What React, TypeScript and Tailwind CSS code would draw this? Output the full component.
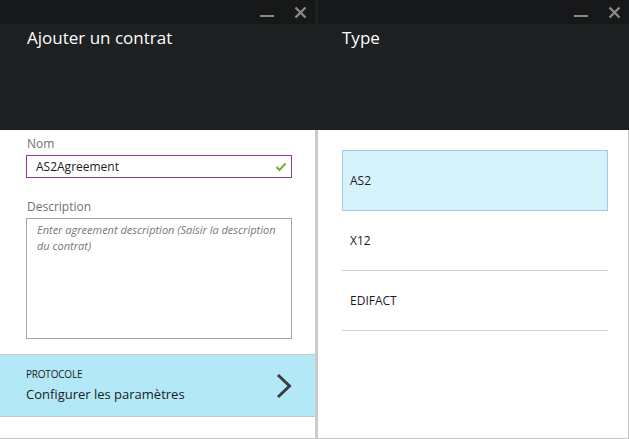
import React from 'react';

const font = { fontFamily: '"Open Sans", "Noto Sans", sans-serif' };

const WindowControls = () => (
  <div className="flex items-center gap-[20px]">
    <div className="w-[14px] h-[2px] bg-[#8a8a8a] mt-[8px]" />
    <svg width="13" height="13" viewBox="0 0 13 13">
      <path d="M1.5 1.5 L11.5 11.5 M11.5 1.5 L1.5 11.5" stroke="#8a8a8a" strokeWidth="2.4" />
    </svg>
  </div>
);

const Header = ({ title, pad }: { title: string; pad: string }) => (
  <div className="h-[130px] bg-[#1e2122] flex flex-col">
    <div className="h-[24px] bg-[#17181a] flex justify-end items-center pr-[8px]">
      <WindowControls />
    </div>
    <div className={`${pad} pt-[2px] text-[17px] text-white leading-[24px]`}>{title}</div>
  </div>
);

const ContractPanel = () => (
  <div className="w-[315px] flex flex-col">
    <Header title="Ajouter un contrat" pad="px-[27px]" />
    <div className="flex-1 flex flex-col bg-white border-b border-[#c8c8c8]">
      <div className="pl-[26px] pr-[23px] pt-[6px]">
        <div className="text-[12px] text-[#707070] leading-[16px] pl-[1px]">Nom</div>
        <div className="mt-[3px] h-[23px] border border-[#8e3c9c] flex items-center justify-between pl-[9px] pr-[4px]">
          <span className="text-[12px] text-[#1a1a1a]">AS2Agreement</span>
          <svg width="12" height="10" viewBox="0 0 12 10">
            <path d="M1.5 5 L4.5 8 L10.5 1.5" stroke="#6ab43c" strokeWidth="2" fill="none" />
          </svg>
        </div>
        <div className="mt-[21px] text-[12px] text-[#707070] leading-[16px] pl-[1px]">Description</div>
        <div className="mt-[3px] h-[121px] border border-[#a6a6a6] pl-[10px] pr-[6px] pt-[3px]">
          <div className="text-[11px] italic text-[#777777] leading-[16px]">
            Enter agreement description (Saisir la description du contrat)
          </div>
        </div>
      </div>
      <div className="mt-[15px] h-[63px] bg-[#b3e9f7] border-y border-[#c8c8c8] flex items-center justify-between pl-[26px] pr-[23px]">
        <div className="flex flex-col">
          <span className="text-[10px] text-[#1a1a1a] leading-[14px] tracking-[-0.2px]">PROTOCOLE</span>
          <span className="text-[13px] text-[#1a1a1a] leading-[20px] mt-[3px]">Configurer les paramètres</span>
        </div>
        <svg width="16" height="26" viewBox="0 0 16 26">
          <path d="M2 2 L13.5 13 L2 24" stroke="#3a3d40" strokeWidth="3" fill="none" />
        </svg>
      </div>
    </div>
  </div>
);

const TypePanel = () => {
  const items = ['AS2', 'X12', 'EDIFACT'];
  return (
    <div className="flex-1 flex flex-col">
      <Header title="Type" pad="px-[24px]" />
      <div className="flex-1 bg-white pl-[24px] pr-[20px] pt-[20px] border-r border-b border-[#c8c8c8]">
        {items.map((item, i) =>
          i === 0 ? (
            <div key={item} className="h-[61px] bg-[#d6f3fc] border border-[#9ccfee] flex items-center pl-[7px] text-[12px] text-[#1a1a1a]">
              {item}
            </div>
          ) : (
            <div key={item} className="h-[60px] border-b border-[#cfcfcf] flex items-center pl-[8px] text-[12px] text-[#1a1a1a]">
              {item}
            </div>
          )
        )}
      </div>
    </div>
  );
};

export default function App() {
  return (
    <div className="w-[629px] h-[439px] flex bg-white overflow-hidden" style={font}>
      <div className="flex flex-col">
        <div className="flex flex-1">
          <ContractPanel />
          <div className="w-[3px] flex flex-col">
            <div className="h-[130px] bg-[#1e2122]" />
            <div className="flex-1 bg-[#cbcbcb]" />
          </div>
        </div>
      </div>
      <TypePanel />
    </div>
  );
}
